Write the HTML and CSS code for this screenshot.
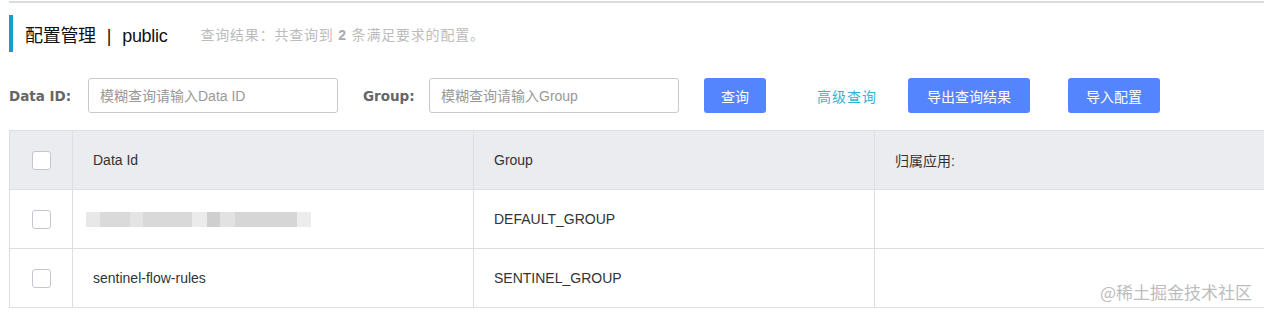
FILE: index.html
```html
<!DOCTYPE html>
<html lang="zh-CN">
<head>
  <meta charset="UTF-8">
  <meta name="viewport" content="width=device-width, initial-scale=1.0">
  <title>配置管理</title>
  <link rel="stylesheet" href="styles.css">
</head>
<body>
  <div class="page">
    <div class="topline"></div>
    <div class="title">
      <h1>配置管理<span class="sep">|</span>public</h1>
      <span class="summary">查询结果：共查询到 <b>2</b> 条满足要求的配置。</span>
    </div>
    <div class="filter">
      <label class="label label-id">Data ID:</label>
      <input class="input" placeholder="模糊查询请输入Data ID">
      <label class="label label-group">Group:</label>
      <input class="input" placeholder="模糊查询请输入Group">
      <button class="btn btn-search">查询</button>
      <a class="link" href="#">高级查询</a>
      <button class="btn btn-export">导出查询结果</button>
      <button class="btn btn-import">导入配置</button>
    </div>
    <table class="grid">
      <thead>
        <tr>
          <th class="col-check"><span class="checkbox"></span></th>
          <th class="col-id">Data Id</th>
          <th class="col-group">Group</th>
          <th class="col-app">归属应用:</th>
        </tr>
      </thead>
      <tbody>
        <tr>
          <td class="col-check"><span class="checkbox"></span></td>
          <td><span class="masked"></span></td>
          <td>DEFAULT_GROUP</td>
          <td></td>
        </tr>
        <tr>
          <td class="col-check"><span class="checkbox"></span></td>
          <td>sentinel-flow-rules</td>
          <td>SENTINEL_GROUP</td>
          <td></td>
        </tr>
      </tbody>
    </table>
  </div>
  <div class="watermark">@稀土掘金技术社区</div>
</body>
</html>
```

FILE: styles.css
```css
body {
  margin: 0;
  overflow: hidden;
  background-color: #fff;
  font-family: "Liberation Sans", "Noto Sans CJK SC", sans-serif;
  font-size: 14px;
  color: #333;
}
.page {
  padding-left: 9px;
}
.topline {
  height: 2px;
  margin-top: 1px;
  background-color: #dcdcdc;
}
.title {
  display: flex;
  align-items: center;
  height: 37px;
  margin-top: 12px;
  border-left: 4px solid #1a9bd0;
  padding-left: 12px;
}
.title h1 {
  margin: 0;
  font-size: 18px;
  font-weight: normal;
  color: #111;
  letter-spacing: -0.3px;
}
.sep {
  margin: 0 11px 0 11px;
}
.summary {
  margin-left: 33px;
  color: #bcbcbc;
  font-size: 14px;
  letter-spacing: 0.8px;
}
.summary b {
  color: #aaa;
}
.filter {
  display: flex;
  align-items: center;
  height: 35px;
  margin-top: 26px;
}
.label {
  font-family: "DejaVu Sans", sans-serif;
  font-weight: bold;
  font-size: 13.5px;
  color: #666;
}
.label-id {
  width: 79px;
}
.label-group {
  width: 66px;
  margin-left: 25px;
}
.input {
  box-sizing: border-box;
  width: 250px;
  height: 35px;
  border: 1px solid #c9c9c9;
  border-radius: 3px;
  padding: 0 11px;
  font-family: "Liberation Sans", "Noto Sans CJK SC", sans-serif;
  font-size: 14px;
  outline: none;
}
.input::placeholder {
  color: #999;
}
.btn {
  height: 35px;
  border: none;
  border-radius: 3px;
  background-color: #5584ff;
  color: #fff;
  font-family: "Liberation Sans", "Noto Sans CJK SC", sans-serif;
  font-size: 14px;
  padding: 0;
}
.btn-search {
  width: 62px;
  margin-left: 25px;
}
.link {
  margin-left: 51px;
  color: #35b3d6;
  text-decoration: none;
  letter-spacing: 1px;
}
.btn-export {
  width: 122px;
  margin-left: 31px;
}
.btn-import {
  width: 92px;
  margin-left: 38px;
}
.grid {
  width: 1270px;
  margin-top: 17px;
  border-collapse: collapse;
  table-layout: fixed;
}
.grid th,
.grid td {
  height: 58px;
  padding: 0 0 0 20px;
  border: 1px solid #dcdee3;
  text-align: left;
  font-weight: normal;
  color: #333;
}
.grid th {
  background-color: #ebecf0;
}
.grid .col-check {
  width: 62px;
  padding: 0;
  text-align: center;
}
.col-id,
.col-group {
  width: 380px;
}
.checkbox {
  display: inline-block;
  box-sizing: border-box;
  width: 19px;
  height: 19px;
  border: 1px solid #c4c6cf;
  border-radius: 3px;
  background-color: #fff;
  vertical-align: middle;
}
.masked {
  display: inline-block;
  width: 225px;
  height: 15px;
  margin-left: -7px;
  vertical-align: middle;
  background: linear-gradient(to right,
    #e8e8e8 0 14px, #dadada 14px 44px, #e4e4e4 44px 57px, #d9d9d9 57px 106px,
    #ebebeb 106px 121px, #cfcfcf 121px 134px, #e2e2e2 134px 149px,
    #d6d6d6 149px 211px, #ededed 211px 225px);
}
.watermark {
  position: absolute;
  right: 12px;
  bottom: 10px;
  font-family: "Noto Sans CJK SC", sans-serif;
  font-size: 17px;
  color: #bdbdbd;
}
```
